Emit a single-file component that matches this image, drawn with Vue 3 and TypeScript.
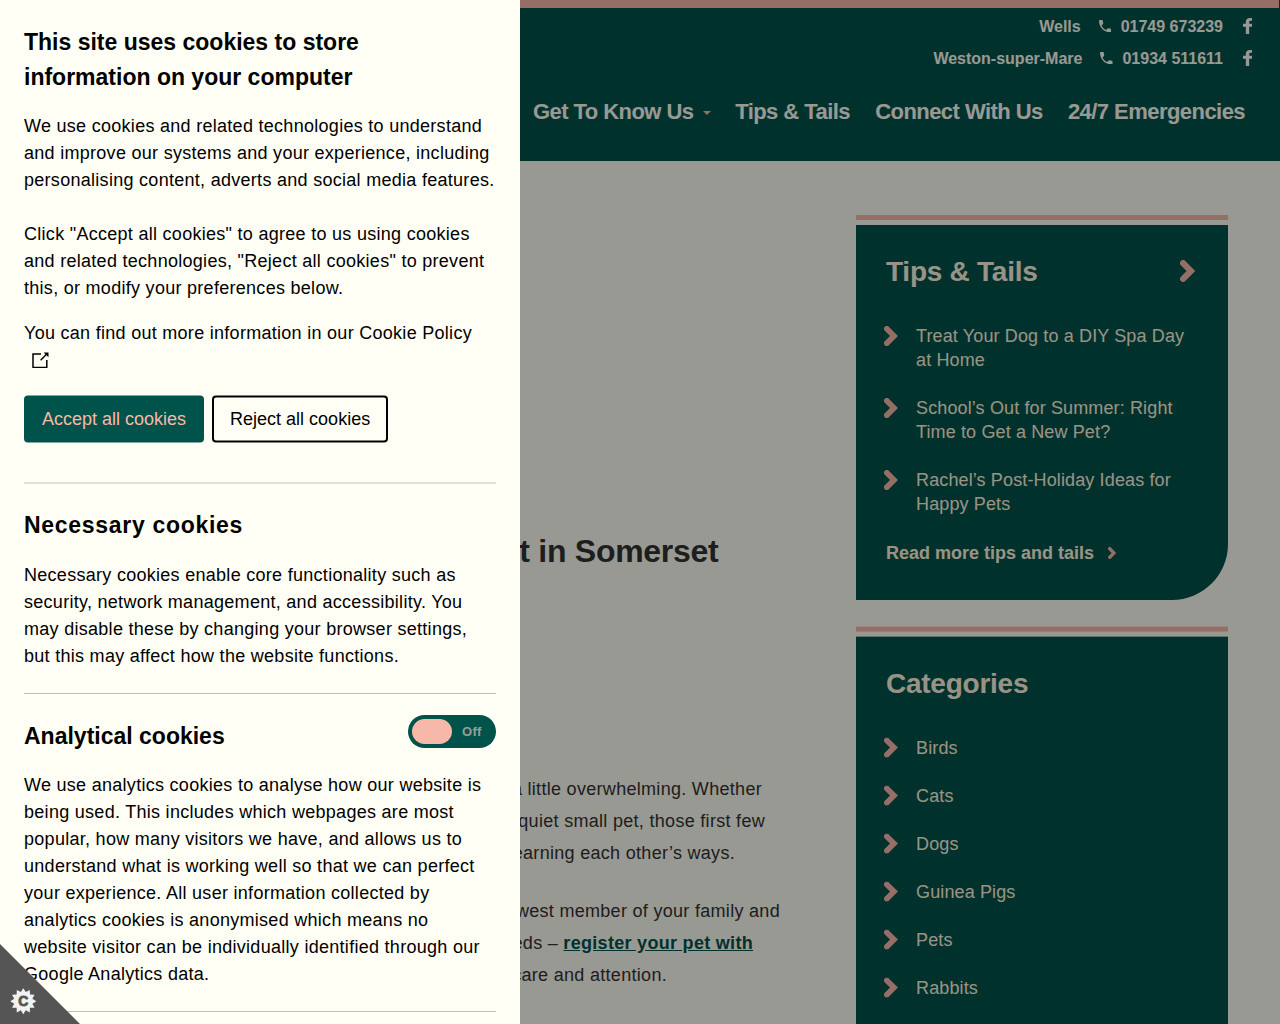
<script setup lang="ts">
interface Line {
  text: string
  inset: number
  link?: string
}

const branches = [
  { name: 'Wells', phone: '01749 673239' },
  { name: 'Weston-super-Mare', phone: '01934 511611' },
]

const nav = [
  { label: 'Get To Know Us', menu: true },
  { label: 'Tips & Tails', menu: false },
  { label: 'Connect With Us', menu: false },
  { label: '24/7 Emergencies', menu: false },
]

const paragraphs: Line[][] = [
  [
    { text: 'a little overwhelming. Whether', inset: 18 },
    { text: 'quiet small pet, those first few', inset: 15 },
    { text: 'learning each other’s ways.', inset: 45 },
  ],
  [
    { text: 'newest member of your family and', inset: 0 },
    { text: 'needs – ', link: 'register your pet with', inset: 27 },
    { text: 'care and attention.', inset: 113 },
  ],
]

const tips = [
  'Treat Your Dog to a DIY Spa Day at Home',
  'School’s Out for Summer: Right Time to Get a New Pet?',
  'Rachel’s Post-Holiday Ideas for Happy Pets',
]

const categories = ['Birds', 'Cats', 'Dogs', 'Guinea Pigs', 'Pets', 'Rabbits']

const star = Array.from({ length: 24 }, (_, i) => {
  const r = i % 2 ? 9.4 : 13
  const a = (i * Math.PI) / 12
  return `${(13 + r * Math.sin(a)).toFixed(2)},${(13 - r * Math.cos(a)).toFixed(2)}`
}).join(' ')
</script>

<template>
  <div class="screen">
    <div class="page">
      <header class="header">
        <div class="strip"></div>
        <div class="branches">
          <div v-for="b in branches" :key="b.name" class="branch">
            <span>{{ b.name }}</span>
            <svg class="phone" viewBox="3 3 18 18">
              <path d="M6.62 10.79c1.44 2.83 3.76 5.14 6.59 6.59l2.2-2.2c.27-.27.67-.36 1.02-.24 1.12.37 2.33.57 3.57.57.55 0 1 .45 1 1V20c0 .55-.45 1-1 1-9.39 0-17-7.61-17-17 0-.55.45-1 1-1h3.5c.55 0 1 .45 1 1 0 1.25.2 2.45.57 3.57.11.35.03.74-.25 1.02l-2.2 2.2z" />
            </svg>
            <span>{{ b.phone }}</span>
            <svg class="facebook" viewBox="95 0 864 1664" preserveAspectRatio="none">
              <path d="M959 12v264h-157q-86 0-116 36t-30 108v189h293l-39 296h-254v759h-306v-759h-255v-296h255v-218q0-186 104-288.5t277-102.5q147 0 228 12z" />
            </svg>
          </div>
        </div>
        <nav class="nav">
          <a v-for="n in nav" :key="n.label">{{ n.label }}<i v-if="n.menu" class="caret"></i></a>
        </nav>
      </header>

      <div class="columns">
        <main class="article">
          <h1>Pet in Somerset</h1>
          <div v-for="(p, i) in paragraphs" :key="i" class="para">
            <div v-for="l in p" :key="l.text" class="line" :style="{ marginRight: l.inset + 'px' }">{{ l.text }}<a v-if="l.link">{{ l.link }}</a></div>
          </div>
        </main>

        <aside class="sidebar">
          <section class="card-wrap">
            <div class="card card-tips">
              <div class="card-head">
                <h2>Tips &amp; Tails</h2>
                <svg class="chev chev-lg" viewBox="0 0 14 20"><path d="M2.8 2.8 10 10l-7.2 7.2" /></svg>
              </div>
              <ul>
                <li v-for="t in tips" :key="t">
                  <svg class="chev" viewBox="0 0 14 20"><path d="M2.8 2.8 10 10l-7.2 7.2" /></svg>
                  <span>{{ t }}</span>
                </li>
              </ul>
              <a class="more">Read more tips and tails<svg class="chev chev-sm" viewBox="0 0 14 20"><path d="M2.8 2.8 10 10l-7.2 7.2" /></svg></a>
            </div>
          </section>
          <section class="card-wrap card-wrap-next">
            <div class="card card-categories">
              <div class="card-head"><h2>Categories</h2></div>
              <ul>
                <li v-for="c in categories" :key="c">
                  <svg class="chev" viewBox="0 0 14 20"><path d="M2.8 2.8 10 10l-7.2 7.2" /></svg>
                  <span>{{ c }}</span>
                </li>
              </ul>
            </div>
          </section>
        </aside>
      </div>
    </div>

    <div class="overlay"></div>

    <div class="panel">
      <h2 class="title">This site uses cookies to store information on your computer</h2>
      <p class="intro">We use cookies and related technologies to understand and improve our systems and your experience, including personalising content, adverts and social media features.<br /><br />Click "Accept all cookies" to agree to us using cookies and related technologies, "Reject all cookies" to prevent this, or modify your preferences below.</p>
      <p class="policy">
        You can find out more information in our Cookie Policy<br />
        <svg class="external" viewBox="0 0 16.5 16.5">
          <path d="M9 2H1v13.6h13.8V8" fill="none" stroke="#000" stroke-width="1.5" />
          <path d="M8.6 8.2 14.5 2.3" fill="none" stroke="#000" stroke-width="1.4" />
          <path d="M11.6.4h4.9v4.9z" />
        </svg>
      </p>
      <div class="buttons">
        <button class="btn accept">Accept all cookies</button>
        <button class="btn reject">Reject all cookies</button>
      </div>
      <hr class="rule-soft" />
      <h3 class="necessary">Necessary cookies</h3>
      <p class="necessary-text">Necessary cookies enable core functionality such as security, network management, and accessibility. You may disable these by changing your browser settings, but this may affect how the website functions.</p>
      <hr />
      <div class="category">
        <h3>Analytical cookies</h3>
        <div class="toggle"><span class="knob"></span><span class="state">Off</span></div>
      </div>
      <p class="analytics-text">We use analytics cookies to analyse how our website is being used. This includes which webpages are most popular, how many visitors we have, and allows us to understand what is working well so that we can perfect your experience. All user information collected by analytics cookies is anonymised which means no website visitor can be individually identified through our Google Analytics data.</p>
      <hr />
    </div>

    <div class="corner">
      <svg viewBox="0 0 80 80">
        <path d="M0 0 80 80H0z" fill="#555" />
        <g transform="translate(10.3 44.2)">
          <polygon :points="star" fill="#f2f2f2" />
          <text x="13" y="18" text-anchor="middle">C</text>
        </g>
      </svg>
    </div>
  </div>
</template>

<style>
body {
  overflow: hidden;
}
</style>

<style scoped>
.screen {
  position: relative;
  width: 1280px;
  height: 1024px;
  overflow: hidden;
  background: #fffff5;
  font-family: "Liberation Sans", Arial, sans-serif;
  font-size: 18px;
}
h1, h2, h3, p, ul {
  margin: 0;
  padding: 0;
}
.header {
  height: 161px;
  background: #00534b;
  color: #fffff5;
  font-weight: bold;
}
.strip {
  height: 8px;
  width: 1279px;
  background: #f9b9aa;
}
.branches {
  display: flex;
  flex-direction: column;
  padding: 3px 28px 0 0;
}
.branch {
  display: flex;
  justify-content: flex-end;
  align-items: center;
  height: 32px;
  font-size: 16px;
}
.branch svg {
  margin-top: -2px;
  fill: #fffff5;
}
.branch .phone {
  width: 12.5px;
  height: 12.5px;
  margin-right: 9.5px;
  margin-left: 18px;
}
.branch .facebook {
  width: 9.5px;
  height: 16px;
  margin-left: 19.5px;
}
.nav {
  display: flex;
  justify-content: flex-end;
  gap: 25.2px;
  padding: 24px 35px 0 0;
  font-size: 22px;
  line-height: 25px;
  letter-spacing: -0.55px;
}
.caret {
  display: inline-block;
  margin: 0 -1.5px 4px 10px;
  border: 4px solid transparent;
  border-top-color: #f9b9aa;
  border-bottom: 0;
}
.columns {
  display: flex;
  justify-content: space-between;
  padding: 54px 52px 0;
}
.article {
  width: 728px;
  color: #333;
  letter-spacing: 0.3px;
  text-align: right;
  white-space: nowrap;
}
h1 {
  margin: 318px 61.5px 203px 0;
  font-size: 32px;
  line-height: 37px;
  letter-spacing: -0.27px;
}
.para {
  margin-bottom: 26px;
}
.line {
  line-height: 32px;
}
.line a {
  color: #00534b;
  font-weight: bold;
  text-decoration: underline;
}
.sidebar {
  width: 372px;
}
.card-wrap {
  margin-bottom: 27px;
  padding-top: 5px;
  border-top: 5px solid #f9b9aa;
}
.card-wrap-next {
  transform: translateY(-0.4px);
}
.card {
  padding: 30px 30px 0;
  background: #00534b;
  color: #fff6df;
}
.card-tips {
  height: 344.6px;
  border-bottom-right-radius: 56px;
}
.card-categories {
  height: 500px;
}
.card-head {
  display: flex;
  justify-content: space-between;
  align-items: center;
  height: 33px;
  padding-right: 3px;
}
.card-head h2 {
  font-size: 28px;
  line-height: 33px;
  letter-spacing: -0.25px;
}
.card ul {
  margin-top: 36px;
  list-style: none;
  letter-spacing: 0.13px;
}
.card li {
  display: flex;
  align-items: flex-start;
  margin-bottom: 24px;
  line-height: 24px;
}
.card li span {
  width: 282px;
}
.card li .chev {
  margin: 2px 18px 0 -2px;
}
.chev {
  flex: none;
  width: 14px;
  height: 20px;
}
.chev path {
  fill: none;
  stroke: #f9b9aa;
  stroke-width: 5.6;
  stroke-linecap: round;
}
.card-head .chev-lg {
  width: 15.4px;
  height: 22px;
  margin-top: -1px;
}
.more {
  display: flex;
  align-items: center;
  height: 26px;
  font-weight: bold;
}
.more .chev-sm {
  width: 8.4px;
  height: 12px;
  margin-left: 14px;
}
.overlay {
  position: absolute;
  inset: 0;
  background: rgba(0, 0, 0, 0.4);
}
.panel {
  position: absolute;
  top: 0;
  left: 0;
  box-sizing: border-box;
  width: 520px;
  height: 1024px;
  padding: 25px 24px 0;
  overflow: hidden;
  background: #fffff5;
  color: #000;
  line-height: 27px;
}
.panel p {
  letter-spacing: 0.285px;
}
.title {
  width: 400px;
  margin-bottom: 18px;
  font-size: 23px;
  line-height: 35px;
}
.intro {
  width: 480px;
  margin-bottom: 18px;
}
.external {
  width: 16.5px;
  height: 16.5px;
  margin-left: 8px;
  vertical-align: -2px;
}
.buttons {
  display: flex;
  gap: 8px;
  margin-top: 21.5px;
  transform: translateY(-0.5px);
}
.btn {
  box-sizing: border-box;
  height: 47px;
  padding: 0 16px;
  border: 2px solid #000;
  border-radius: 4px;
  background: #fffff5;
  color: #000;
  font: 18px "Liberation Sans", Arial, sans-serif;
}
.accept {
  border-color: #00534b;
  background: #00534b;
  color: #f8b8a9;
}
hr {
  height: 1px;
  margin: 0;
  border: 0;
  background: #bfbfb8;
}
.rule-soft {
  height: 2px;
  margin-top: 39.5px;
  background: #dfdfd6;
}
h3 {
  font-size: 23px;
  line-height: 35px;
}
.necessary {
  margin: 24px 0 19px;
  letter-spacing: 0.7px;
}
.necessary-text {
  margin-bottom: 22.5px;
}
.category {
  display: flex;
  justify-content: space-between;
  align-items: flex-start;
  padding-top: 21px;
}
.category h3 {
  margin-top: 4px;
}
.toggle {
  display: flex;
  align-items: center;
  box-sizing: border-box;
  width: 88px;
  height: 33px;
  padding-left: 4px;
  border-radius: 17px;
  background: #00534b;
}
.knob {
  width: 40px;
  height: 25px;
  border-radius: 12.5px;
  background: #f8b8a9;
}
.state {
  margin-left: 10px;
  color: #94a096;
  font-size: 13px;
  font-weight: bold;
  letter-spacing: 0.3px;
}
.analytics-text {
  width: 466px;
  margin: 18px 0 23px;
}
.corner {
  position: absolute;
  left: 0;
  bottom: 0;
  width: 80px;
  height: 80px;
}
.corner svg {
  display: block;
}
.corner text {
  font: bold 14px "Liberation Sans", Arial, sans-serif;
  fill: #555;
  stroke: #555;
  stroke-width: 0.8;
}
</style>
